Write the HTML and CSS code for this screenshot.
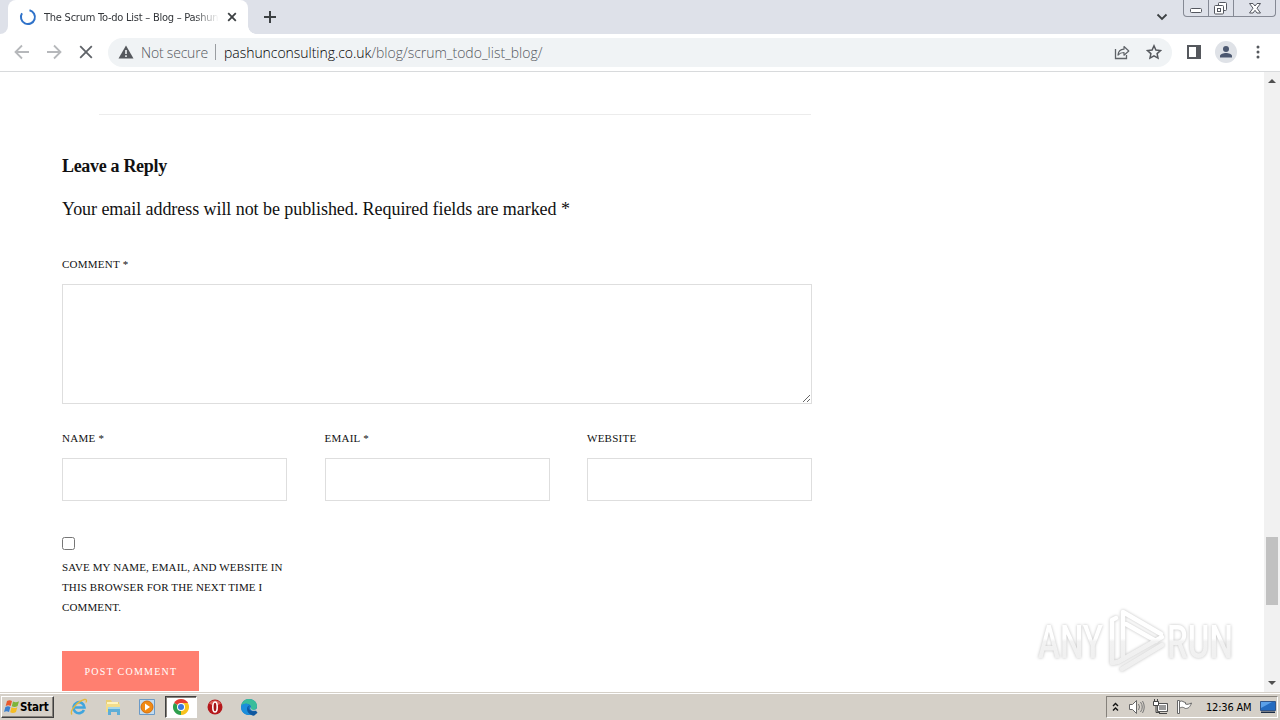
FILE: index.html
```html
<!DOCTYPE html>
<html lang="en">
<head>
    <meta charset="UTF-8">
    <title>The Scrum To-do List – Blog – Pashun Consulting</title>
    <link rel="stylesheet" href="styles.css">
</head>
<body>
    <div class="tabs">
        <div class="prev-tab"></div>
        <div class="tab">
            <svg class="spinner" width="18" height="18" viewBox="0 0 18 18"><path d="M10.500 2.200A7 7 0 1 1 3 5.300" fill="none" stroke="#2f72c9" stroke-width="2"/></svg>
            <span class="tab-title">The Scrum To-do List – Blog – Pashun</span>
            <svg width="10" height="10" viewBox="0 0 10 10"><path d="M1.200 1.200l7.600 7.600M8.800 1.200L1.200 8.800" stroke="#3c4043" stroke-width="1.800"/></svg>
        </div>
        <div class="new-tab">
            <svg width="12" height="12" viewBox="0 0 12 12"><path d="M6 0v12M0 6h12" stroke="#3c4043" stroke-width="2"/></svg>
        </div>
        <svg class="chevron" width="12" height="8" viewBox="0 0 12 8"><path d="M1.500 1.500L6 6l4.500-4.500" fill="none" stroke="#3c4043" stroke-width="1.800"/></svg>
        <div class="window-buttons">
            <span class="wb"><svg width="24" height="16" viewBox="0 0 24 16"><rect x="6.500" y="8.500" width="11" height="4" rx="1" fill="#fff" stroke="#54575f"/></svg></span>
            <span class="wb"><svg width="24" height="16" viewBox="0 0 24 16"><rect x="9.500" y="2.500" width="8" height="8" rx="1" fill="#fff" stroke="#54575f"/><rect x="5.500" y="5.500" width="9" height="8.500" rx="1" fill="#fff" stroke="#54575f"/><rect x="8.500" y="8.500" width="3" height="3" fill="#fff" stroke="#54575f"/></svg></span>
            <span class="wb wide"><svg width="41" height="16" viewBox="0 0 41 16"><path d="M15.500 3.500h3.500l2 2.500 2-2.500h3.500l-3.500 4.700 3.500 4.800h-3.500l-2-2.700-2 2.700h-3.500l3.500-4.800z" fill="#fff" stroke="#54575f"/></svg></span>
        </div>
    </div>

    <div class="toolbar">
        <svg width="16" height="16" viewBox="0 0 16 16"><path d="M15 8H2M8 1.500L1.500 8 8 14.500" fill="none" stroke="#b6b8bb" stroke-width="1.800"/></svg>
        <svg width="16" height="16" viewBox="0 0 16 16"><path d="M1 8h13M8 1.500L14.500 8 8 14.500" fill="none" stroke="#b6b8bb" stroke-width="1.800"/></svg>
        <svg width="16" height="16" viewBox="0 0 16 16"><path d="M2.200 2.200l11.600 11.600M13.800 2.200L2.200 13.800" stroke="#5f6368" stroke-width="1.800"/></svg>
        <div class="omnibox">
            <svg width="16" height="14" viewBox="0 0 16 14"><path d="M8 .5L15.500 13.500H.5z" fill="#55585d"/><path d="M8 5v4M8 10.300v1.700" stroke="#f1f3f4" stroke-width="1.600"/></svg>
            <span class="not-secure">Not secure</span>
            <span class="divider"></span>
            <span class="url"><b>pashunconsulting.co.uk</b>/blog/scrum_todo_list_blog/</span>
            <svg class="share" width="16" height="16" viewBox="0 0 16 16"><path d="M1.500 5v9.500h11V11" fill="none" stroke="#5f6368" stroke-width="1.300"/><path d="M4 11c.3-3.600 2.300-5.600 6-5.800V2.500L14.800 7 10 11.200V8.500c-2.800 0-4.500.8-6 2.500z" fill="none" stroke="#5f6368" stroke-width="1.200" stroke-linejoin="round"/></svg>
            <svg width="16" height="16" viewBox="0 0 16 16"><path d="M8 1.800l1.900 4.200 4.600.5-3.400 3.100.9 4.500L8 11.800l-4 2.300.9-4.500L1.500 6.500l4.600-.5z" fill="none" stroke="#55585d" stroke-width="1.500"/></svg>
        </div>
        <svg class="panel" width="14" height="14" viewBox="0 0 14 14"><rect x="1" y="1" width="12" height="12" fill="#fff" stroke="#55585d" stroke-width="2"/><path d="M9 0h5v14H9z" fill="#55585d"/></svg>
        <svg class="avatar" width="22" height="22" viewBox="0 0 22 22"><circle cx="11" cy="11" r="11" fill="#dfe2e7"/><circle cx="11" cy="8" r="3" fill="#4c5870"/><path d="M5 16.500v-1.500c0-2 3.500-3 6-3s6 1 6 3v1.500z" fill="#4c5870"/></svg>
        <svg class="dots" width="4" height="14" viewBox="0 0 4 14" fill="#55585d"><circle cx="2" cy="2" r="1.500"/><circle cx="2" cy="7" r="1.500"/><circle cx="2" cy="12" r="1.500"/></svg>
    </div>

    <div class="viewport">
        <div class="page">
            <hr class="separator">
            <h3 class="reply-title">Leave a Reply</h3>
            <p class="notes">Your email address will not be published. Required fields are marked *</p>
            <form class="comment-form">
                <label class="label" for="comment">Comment *</label>
                <textarea class="field comment" id="comment"></textarea>
                <div class="fields">
                    <div>
                        <label class="label" for="author">Name *</label>
                        <input class="field" id="author" type="text">
                    </div>
                    <div>
                        <label class="label" for="email">Email *</label>
                        <input class="field" id="email" type="text">
                    </div>
                    <div>
                        <label class="label" for="url">Website</label>
                        <input class="field" id="url" type="text">
                    </div>
                </div>
                <div class="consent">
                    <input class="check" id="consent" type="checkbox">
                    <label class="label consent-label" for="consent">Save my name, email, and website in<br>this browser for the next time I<br>comment.</label>
                </div>
                <button class="submit" type="button">Post Comment</button>
            </form>
        </div>
        <div class="scrollbar">
            <svg width="8" height="4" viewBox="0 0 8 4"><path d="M4 0l4 4H0z" fill="#505050"/></svg>
            <div class="thumb"></div>
            <svg width="8" height="4" viewBox="0 0 8 4"><path d="M0 0h8L4 4z" fill="#505050"/></svg>
        </div>
        <svg class="watermark" width="234" height="80" viewBox="0 0 234 80">
            <defs>
                <linearGradient id="fade" gradientUnits="userSpaceOnUse" x1="0" y1="0" x2="0" y2="80">
                    <stop offset=".48" stop-color="#fff"/>
                    <stop offset=".52" stop-color="#f2f2f2"/>
                    <stop offset="1" stop-color="#ededed"/>
                </linearGradient>
            </defs>
            <g class="wm-text" fill="url(#fade)">
                <text x="8" y="58" textLength="65" lengthAdjust="spacingAndGlyphs">ANY</text>
                <text x="137" y="58" textLength="66" lengthAdjust="spacingAndGlyphs">RUN</text>
            </g>
            <g fill="none" stroke="url(#fade)" stroke-width="4.500" stroke-linejoin="round" stroke-linecap="round">
                <path d="M93 59V12l38 22"/>
                <path d="M86 18l-4 2v43l6-1 44-25"/>
                <path d="M96 24l30 17M92 69l40-24"/>
            </g>
        </svg>
    </div>

    <div class="taskbar">
        <div class="start">
            <svg width="16" height="16" viewBox="0 0 16 16"><path d="M3 2c2-1.200 3.500-1 5 0L6.700 7c-1.800-1-3.200-1-5 0z" fill="#e9592c"/><path d="M9 2.400c2 1.100 3.800 1 6-.2L13.600 7c-2 1.300-3.900 1.300-5.800.3z" fill="#7db43a"/><path d="M1.400 8c2-1.200 3.500-1 5 0L5 13c-1.800-1-3.200-1-5 0z" fill="#3b80cf"/><path d="M7.500 8.300c2 1.100 3.800 1 5.800-.1L12 13c-2 1.300-3.900 1.300-5.800.3z" fill="#f5bd24"/></svg>
            <span>Start</span>
        </div>
        <div class="launchers">
            <span class="launch"><svg width="18" height="18" viewBox="0 0 18 18"><path d="M14 12A5.500 5.500 0 1 1 14.500 9.500H5" fill="none" stroke="#3fa5de" stroke-width="2.600"/><path d="M2 16.500C-1 13 8 3 14.500 1.500c2.500-.3 2.300 1.500 1.300 3" fill="none" stroke="#e3b83c" stroke-width="1.300"/></svg></span>
            <span class="launch"><svg width="18" height="18" viewBox="0 0 18 18"><path d="M2 2h5l1 2h7v9H2z" fill="#e9cf77"/><path d="M3 4h11v3H3z" fill="#fff4bd"/><path d="M2 6h14v8H2z" fill="#f2dd8c"/><path d="M4 17v-6h12v6h-3v-3H7v3z" fill="#5eaed7"/><path d="M4 9h12v2H4z" fill="#a5d6e9"/></svg></span>
            <span class="launch"><svg width="18" height="18" viewBox="0 0 18 18"><path d="M1.500 1.500h15v15h-15z" fill="#c3dcf0" stroke="#6b9ac7"/><circle cx="9" cy="9" r="6" fill="#f18a13" stroke="#d46d0c"/><path d="M7 5.500v7L12 9z" fill="#fff"/></svg></span>
            <span class="launch active"><svg width="16" height="16" viewBox="0 0 16 16"><path d="M8 8L1.070 4A8 8 0 0 1 14.930 4z" fill="#e63e32"/><path d="M8 8L14.930 4A8 8 0 0 1 8 16z" fill="#f8c21c"/><path d="M8 8v8A8 8 0 0 1 1.070 4z" fill="#2e9f4d"/><path d="M8 4h7l-3.500 6z" fill="#f8c21c"/><path d="M8 4h7l-1-1H5z" fill="#e63e32"/><circle cx="8" cy="8" r="4" fill="#fff"/><circle cx="8" cy="8" r="3" fill="#3979de"/></svg></span>
            <span class="launch"><svg width="16" height="16" viewBox="0 0 16 16"><circle cx="8" cy="8" r="7.500" fill="#b5181c"/><path d="M2 4.500a7.500 7.500 0 0 1 12 0C10 7 6 7 2 4.500z" fill="#dc5f5a"/><ellipse cx="8" cy="8" rx="2.200" ry="5" fill="#a51317" stroke="#fff" stroke-width="1.600"/></svg></span>
            <span class="launch"><svg width="18" height="18" viewBox="0 0 18 18"><circle cx="9" cy="9" r="8" fill="#1577c8"/><path d="M1.200 8C2 3.500 5 1 9 1c4.500 0 8 3 8 7 0 3-2 4-4 4s-3.300-.7-2-2C12 6 5 4 1.200 8z" fill="#39bd9b"/><path d="M1.200 8C4 4.500 8 5 9.500 7.500 6.500 7.500 5.500 15 12 16.400 6 18.500 0 14 1.200 8z" fill="#1b8edb"/><path d="M9.500 7.500c-3 2 .5 7.500 6.500 5.200l1.500 2-3.500 3C7 17 5 9 9.500 7.500z" fill="#10589f"/><path d="M10.500 9c-.7 3 2 4.500 6 3.500l1 .5V10c-1.500 2-4 2.300-6 1.500z" fill="#d5d0c8"/></svg></span>
        </div>
        <div class="tray">
            <svg width="7" height="10" viewBox="0 0 7 10"><path d="M1 4l2.500-2.500L6 4M1 8.500L3.500 6 6 8.500" fill="none" stroke="#111" stroke-width="1.400"/></svg>
            <svg class="sound" width="17" height="16" viewBox="0 0 17 16"><path d="M1.500 5.500h3l4-4v13l-4-4h-3z" fill="#fff" stroke="#666"/><path d="M10.500 5q2 3 0 6M12.500 3q3.500 5 0 10M14.500 2q3.500 6 0 12" fill="none" stroke="#777"/></svg>
            <svg class="net" width="17" height="16" viewBox="0 0 17 16"><path d="M5.500 4.500h10v8h-10z" fill="#999" stroke="#555"/><path d="M6.500 5.500h8v6h-8z" fill="none" stroke="#fff"/><path d="M7 14.500h8M1.500 2.500h5v4h-5zM2.500 0v2M5.500 0v2M4 7v6.500h4" fill="none" stroke="#444"/><path d="M2 3h4v3H2z" fill="#fff"/></svg>
            <svg class="flag" width="17" height="16" viewBox="0 0 17 16"><path d="M1.500 1.500h2v13h-2z" fill="#fff" stroke="#666"/><path d="M3.500 2.500c3-1.500 4 1 6 1v1.500c2 .8 3.500 0 6-1-1.500 4-3 5.500-6 5.500-1 0-1-1-2-1-1.500-.5-2.500 0-4 .5z" fill="#fff" stroke="#666"/></svg>
            <span class="clock">12:36 AM</span>
            <svg class="desk" width="16" height="14" viewBox="0 0 16 14"><path d="M.5 1.500h15v9H.5z" fill="#246bc0" stroke="#32568b"/><path d="M1 2h11L1 8z" fill="#5ba0e8"/><path d="M1 11.500h14v1.500H1z" fill="#1b2c46"/></svg>
        </div>
    </div>
</body>
</html>
```

FILE: styles.css
```css
* { box-sizing: border-box; }
body { margin: 0; width: 1280px; height: 720px; overflow: hidden; display: flex; flex-direction: column; background: #fff; font-family: "Liberation Serif", "Times New Roman", serif; color: #111; }
svg { display: block; flex: none; }

/* tab strip */
.tabs { height: 34px; flex: none; display: flex; background: #dee1e9; font-family: "DejaVu Sans Condensed", "DejaVu Sans", sans-serif; }
.prev-tab { width: 8px; background: #fff; }
.prev-tab::before { content: ""; display: block; height: 34px; background: #dee1e9; border-radius: 0 0 8px 0; }
.tab { width: 240px; display: flex; align-items: center; padding: 0 11px; background: #fff; border-radius: 8px 8px 0 0; }
.tab-title { width: 176px; margin: 0 8px 0 7px; font-size: 11px; letter-spacing: -0.24px; white-space: nowrap; overflow: hidden; color: #34373b; -webkit-mask-image: linear-gradient(to right, #000 86%, transparent); }
.new-tab { width: 46px; padding: 11px 16px; background: radial-gradient(circle at 8px 0, #dee1e9 7.5px, #fff 8px) 0 26px / 8px 8px no-repeat; }
.chevron { margin: 13px 15px 0 auto; }
.window-buttons { display: flex; height: 17px; margin-right: 4px; border: 1px solid #858994; border-top: 0; border-radius: 0 0 4px 4px; }
.wb { width: 25px; border-right: 1px solid #858994; }
.wide { width: 41px; border-right: 0; }

/* toolbar */
.toolbar { height: 38px; flex: none; display: flex; align-items: center; padding: 0 20px 1px 14px; gap: 16px; background: #fff; border-bottom: 1px solid #d8dadc; }
.omnibox { width: 1064px; height: 29px; margin-left: -2px; display: flex; align-items: center; padding: 0 10px; background: #f0f3f5; border-radius: 15px; font-family: "Open Sans", sans-serif; font-size: 14px; font-weight: 300; white-space: nowrap; color: #55585d; }
.not-secure { margin-left: 7px; width: 67px; letter-spacing: -0.2px; }
.divider { width: 1px; height: 16px; margin: 0 8px 0 7px; background: #9a9da1; }
.url { letter-spacing: -0.02px; }
.url b { font-weight: 300; letter-spacing: -0.04px; color: #000; }
.share { margin: 0 16px 0 auto; }
.panel { margin-left: -1px; }
.avatar { margin-left: -2px; }
.dots { margin-left: 3px; }

/* page */
.viewport { position: relative; flex: 1; min-height: 0; display: flex; overflow: hidden; background: #fff; }
.page { width: 1264px; padding: 42px 0 0 62px; }
.separator { width: 712px; height: 1px; margin: 0 0 0 37px; border: 0; background: #ececec; }
.reply-title { margin: 40px 0 0; font-size: 18px; line-height: 22px; letter-spacing: -0.32px; }
.notes { margin: 20px 0 0; font-size: 18px; line-height: 24px; letter-spacing: -0.06px; white-space: nowrap; }
.comment-form { width: 750px; margin-top: 33px; }
.label { display: block; font-size: 11px; line-height: 20px; letter-spacing: 0.25px; text-transform: uppercase; white-space: nowrap; }
.consent-label { letter-spacing: 0.13px; }
.field { display: block; width: 100%; height: 43px; margin: 10px 0 0; border: 1px solid #dedede; outline: 0; background: #fff; }
.comment { height: 120px; resize: vertical; }
.fields { display: grid; grid-template-columns: repeat(3, 225px); justify-content: space-between; margin-top: 24px; }
.consent { margin-top: 36px; }
.check { display: block; width: 13px; height: 13px; margin: 0 0 7px; }
.submit { display: block; width: 137px; height: 40px; margin-top: 34px; padding: 0 0 0 1px; border: 0; background: #ff7f70; color: #fff; font: 10px "Liberation Serif", serif; letter-spacing: 1.25px; text-transform: uppercase; }
.scrollbar { width: 16px; display: flex; flex-direction: column; align-items: center; padding: 7px 0; background: #f1f1f1; }
.thumb { width: 12px; height: 68px; margin: 454px 0 auto; background: #c1c1c1; }
.watermark { position: absolute; left: 1030px; top: 528px; filter: drop-shadow(0 0 1.5px rgba(0, 0, 0, .25)); }
.wm-text { font: 500 47px "Roboto", sans-serif; }

/* taskbar */
.taskbar { height: 28px; flex: none; display: flex; align-items: center; padding: 1px 1px 0; background: #d5d0c8; border-top: 1px solid #d5d0c8; box-shadow: inset 0 1px #fff; font-family: "DejaVu Sans Condensed", sans-serif; font-size: 11px; color: #000; }
.start { width: 53px; height: 22px; display: flex; align-items: center; padding-left: 2px; gap: 0; border: 1px solid; border-color: #fff #404040 #404040 #fff; box-shadow: inset -1px -1px #85817b; font-size: 11.5px; font-weight: bold; letter-spacing: -0.2px; }
.launchers { display: flex; margin-left: 9px; gap: 2px; }
.launch { width: 32px; height: 22px; display: flex; align-items: center; justify-content: center; }
.active { background: #fff; border: 1px solid; border-color: #404040 #fff #fff #404040; box-shadow: inset 1px 1px #85817b; }
.tray { width: 172px; height: 22px; margin: 0 1px 0 auto; display: flex; align-items: center; padding-left: 5px; border: 1px solid; border-color: #85817b #fff #fff #85817b; }
.sound { margin-left: 9px; }
.net { margin-left: 7px; }
.flag { margin-left: 7px; }
.clock { width: 46px; margin-left: 13px; letter-spacing: -0.2px; white-space: nowrap; }
.desk { margin-left: 8px; }
```
